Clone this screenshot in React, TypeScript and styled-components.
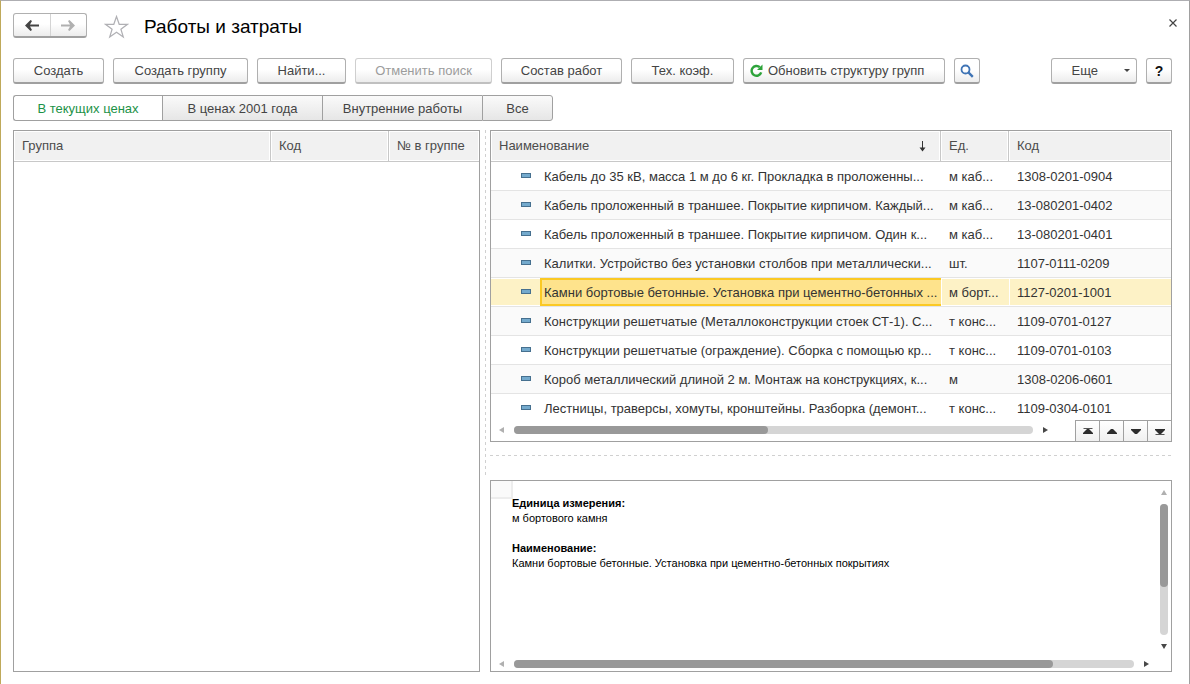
import React from "react";
import styled, { createGlobalStyle, css } from "styled-components";

const GlobalStyle = createGlobalStyle`
  *, *::before, *::after { box-sizing: border-box; }
  body { margin: 0; background: #fff; }
  body, button, table {
    font-family: "Liberation Sans", Arial, sans-serif;
    font-size: 13px;
    line-height: 16px;
    color: #333;
  }
`;

const line = "#a0a0a0";

const Window = styled.main`
  display: flex;
  flex-direction: column;
  min-height: 100vh;
  padding: 12px 17px 12px 12px;
  border-top: 1px solid #aeaeb2;
  border-left: 1px solid #bfa95a;
  border-right: 1px solid ${line};
  background: #fff;
`;

const TitleBar = styled.header`
  display: flex;
  align-items: center;
  height: 27px;
  margin-bottom: 18px;
`;

const raised = css`
  border: 1px solid #b0b0b0;
  border-bottom: 2px solid #a0a0a0;
  border-radius: 3px;
  background: linear-gradient(#fff 45%, #ececec);
`;

const NavGroup = styled.nav`
  ${raised}
  display: flex;
  align-self: flex-start;
  width: 74px;
  height: 25px;
  margin-right: 17px;
`;

const NavButton = styled.button`
  display: flex;
  flex: 1;
  align-items: center;
  justify-content: center;
  padding: 0;
  border: 0;
  background: none;
  & + & { border-left: 1px solid #d4d4d4; }
`;

const StarButton = styled.button`
  display: flex;
  padding: 0;
  border: 0;
  background: none;
`;

const Title = styled.h1`
  flex: 1;
  margin: 0 0 0 15px;
  font-size: 19px;
  line-height: 24px;
  font-weight: 400;
  color: #000;
`;

const CloseButton = styled.button`
  display: flex;
  align-self: flex-start;
  padding: 6px 3px;
  margin-right: -8px;
  border: 0;
  background: none;
`;

const Toolbar = styled.div`
  display: flex;
  gap: 9px;
  margin-bottom: 11px;
`;

const ToolButton = styled.button<{ $width: number }>`
  ${raised}
  display: flex;
  align-items: center;
  justify-content: center;
  gap: 5px;
  width: ${(p) => p.$width}px;
  height: 26px;
  padding: 0;
  color: #444;
  white-space: nowrap;
  &:disabled { color: #9c9c9c; border-color: #cfcfcf; border-bottom-color: #c0c0c0; }
`;

const RefreshButton = styled(ToolButton)`
  justify-content: flex-start;
  padding-left: 6px;
`;

const MoreButton = styled(ToolButton)`
  justify-content: flex-end;
  gap: 26px;
  padding-right: 6px;
`;

const HelpButton = styled(ToolButton)`
  font-size: 14px;
  font-weight: 700;
  color: #111;
`;

const Spacer = styled.span`
  flex: 1;
`;

const Segments = styled.div`
  display: flex;
  margin-bottom: 9px;
`;

const Segment = styled.button<{ $width: number; $active?: boolean }>`
  width: ${(p) => p.$width}px;
  height: 26px;
  padding: 2px 0 0;
  border: 1px solid ${line};
  border-right-width: 0;
  background: ${(p) => (p.$active ? "#fff" : "linear-gradient(#fafafa, #e6e6e6)")};
  color: ${(p) => (p.$active ? "#1c9247" : "#444")};
  &:first-child { border-radius: 3px 0 0 3px; }
  &:last-child { border-right-width: 1px; border-radius: 0 3px 3px 0; }
`;

const Workspace = styled.div`
  display: grid;
  flex: 1;
  grid-template-columns: minmax(0, 467fr) 10px minmax(0, 682fr);
  grid-template-rows: auto minmax(192px, 1fr);
`;

const Panel = styled.section`
  display: flex;
  flex-direction: column;
  border: 1px solid ${line};
  background: #fff;
`;

const GroupPanel = styled(Panel)`
  grid-row: span 2;
`;

const VerticalSplitter = styled.div`
  width: 1px;
  margin: 0 0 5px 5px;
  background: repeating-linear-gradient(#d0d0d0 0 3px, transparent 3px 6px);
`;

const HorizontalSplitter = styled.div`
  height: 1px;
  margin: 13px 0 24px;
  background: repeating-linear-gradient(90deg, #d0d0d0 0 3px, transparent 3px 6px);
`;

const Grid = styled.table`
  width: 100%;
  table-layout: fixed;
  border-collapse: separate;
  border-spacing: 0;
`;

const HeadCell = styled.th<{ $width?: number }>`
  width: ${(p) => (p.$width ? `${p.$width}px` : "auto")};
  height: 31px;
  padding: 0 0 0 8px;
  border-right: 1px solid #c8c8c8;
  border-bottom: 1px solid #c8c8c8;
  background: #f1f1f1;
  box-shadow: inset 0 0 0 1px #fff;
  font-weight: 400;
  text-align: left;
  color: #4c4c4c;
  white-space: nowrap;
  &:last-child { border-right: 0; }
`;

const SortedHead = styled.span`
  display: flex;
  align-items: center;
  justify-content: space-between;
  padding-right: 14px;
`;

const RowsViewport = styled.div`
  height: 289px;
  overflow: hidden;
`;

const Cell = styled.td`
  height: 29px;
  padding: 2px 0 0 8px;
  border-bottom: 1px solid #e4e4e4;
  overflow: hidden;
  white-space: nowrap;
`;

const MarkCell = styled(Cell)`
  padding: 0 0 1px 30px;
`;

const NameCell = styled(Cell)`
  padding-left: 4px;
`;

const Row = styled.tr<{ $selected?: boolean }>`
  &:nth-child(even) { background: #fafafa; }
  ${(p) =>
    p.$selected &&
    css`
      && { background: #fdf2c6; }
      ${Cell} { box-shadow: inset 0 1px #fff, inset 0 -1px #fff, inset 1px 0 #fff; }
      ${MarkCell} { box-shadow: inset 0 1px #fff, inset 0 -1px #fff; }
      ${NameCell} {
        background: #fee38c;
        box-shadow: inset 0 2px #fbc924, inset 0 -2px #fbc924, inset 2px 0 #fbc924;
      }
    `}
`;

const Mark = styled.span`
  display: block;
  width: 10px;
  height: 5px;
  border: 1px solid #46708f;
  background: #74aacd;
`;

const ScrollRow = styled.div`
  display: flex;
  height: 21px;
  padding-left: 8px;
`;

const DetailsScrollRow = styled(ScrollRow)`
  height: 15px;
  padding-right: 22px;
`;

const ScrollArea = styled.div<{ $vertical?: boolean }>`
  display: flex;
  flex: 1;
  flex-direction: ${(p) => (p.$vertical ? "column" : "row")};
  align-items: center;
  gap: ${(p) => (p.$vertical ? 9 : 10)}px;
`;

const TableScroll = styled(ScrollArea)`
  padding: 0 27px 2px 0;
`;

const Track = styled.div<{ $vertical?: boolean }>`
  display: flex;
  flex: 1;
  flex-direction: ${(p) => (p.$vertical ? "column" : "row")};
  ${(p) => (p.$vertical ? "width" : "height")}: 8px;
  border-radius: 4px;
  background: #d5d5d5;
`;

const Thumb = styled.div<{ $share: number }>`
  flex: 0 0 ${(p) => p.$share}%;
  border-radius: 4px;
  background: #999;
`;

const Pager = styled.div`
  display: flex;
`;

const PagerButton = styled.button`
  display: flex;
  align-items: center;
  justify-content: center;
  width: 24px;
  padding: 0;
  border: solid ${line};
  border-width: 1px 0 0 1px;
  background: linear-gradient(#fff, #f0f0f0);
`;

const DetailsBody = styled.div`
  display: flex;
  flex: 1;
`;

const SheetCorner = styled.div`
  width: 22px;
  height: 18px;
  border: solid #ededed;
  border-width: 0 2px 2px 0;
  background: #fafafa;
`;

const Details = styled.dl`
  flex: 1;
  margin: 15px 0 0 -1px;
  font-size: 11px;
  line-height: 15px;
  color: #000;
`;

const Term = styled.dt`
  font-weight: 700;
`;

const Description = styled.dd`
  margin: 0 0 15px;
`;

const VerticalScrollColumn = styled.div`
  display: flex;
  width: 8px;
  margin: 9px 3px 7px 0;
`;

type Direction = "up" | "down" | "left" | "right";

const arrowPaths: Record<Direction, string> = {
  up: "M0 5L3 0L6 5Z",
  down: "M0 0L3 5L6 0Z",
  left: "M5 0L0 3L5 6Z",
  right: "M0 0L5 3L0 6Z",
};

function ScrollArrow({ to, muted }: { to: Direction; muted?: boolean }) {
  const upright = to === "up" || to === "down";
  return (
    <svg width={upright ? 6 : 5} height={upright ? 5 : 6} aria-hidden="true">
      <path d={arrowPaths[to]} fill={muted ? "#b0b0b0" : "#484848"} />
    </svg>
  );
}

function PagerIcon({ down, edge }: { down?: boolean; edge?: boolean }) {
  return (
    <svg width="10" height="8" viewBox="0 0 10 8" aria-hidden="true">
      <path d={down ? "M0 2H10V3L6 7H4L0 3Z" : "M0 7H10V6L6 2H4L0 6Z"} fill="#2d2d2d" />
      {edge && <path d={down ? "M0.500 7.500H9.500" : "M0.500 1.500H9.500"} stroke="#555" />}
    </svg>
  );
}

function NavArrow({ forward }: { forward?: boolean }) {
  return (
    <svg width="14" height="11" viewBox="0 0 14 11" aria-hidden="true">
      <path
        d={
          forward
            ? "M0 4.500H9L7 1L8.500 0L14 5.500L8.500 11L7 10L9 6.500H0Z"
            : "M14 4.500H5L7 1L5.500 0L0 5.500L5.500 11L7 10L5 6.500H14Z"
        }
        fill={forward ? "#b0b0b0" : "#444"}
      />
    </svg>
  );
}

const rows = [
  ["Кабель до 35 кВ, масса 1 м до 6 кг. Прокладка в проложенны...", "м каб...", "1308-0201-0904"],
  ["Кабель проложенный в траншее. Покрытие кирпичом. Каждый...", "м каб...", "13-080201-0402"],
  ["Кабель проложенный в траншее. Покрытие кирпичом. Один к...", "м каб...", "13-080201-0401"],
  ["Калитки. Устройство без установки столбов при металлически...", "шт.", "1107-0111-0209"],
  ["Камни бортовые бетонные. Установка при цементно-бетонных ...", "м борт...", "1127-0201-1001"],
  ["Конструкции решетчатые (Металлоконструкции стоек СТ-1). С...", "т конс...", "1109-0701-0127"],
  ["Конструкции решетчатые (ограждение). Сборка с помощью кр...", "т конс...", "1109-0701-0103"],
  ["Короб металлический длиной 2 м. Монтаж на конструкциях, к...", "м", "1308-0206-0601"],
  ["Лестницы, траверсы, хомуты, кронштейны. Разборка (демонт...", "т конс...", "1109-0304-0101"],
];
const selectedCode = "1127-0201-1001";

export default function App() {
  return (
    <Window>
      <GlobalStyle />
      <TitleBar>
        <NavGroup>
          <NavButton aria-label="Назад"><NavArrow /></NavButton>
          <NavButton aria-label="Вперед"><NavArrow forward /></NavButton>
        </NavGroup>
        <StarButton aria-label="Избранное">
          <svg width="25" height="24" viewBox="0 0 25 24" aria-hidden="true">
            <path
              d="M12.500 1.500L15.200 9.300H23.500L16.900 14.200L19.300 22L12.500 17.200L5.700 22L8.100 14.200L1.500 9.300H9.800Z"
              fill="none"
              stroke="#b0b0b4"
              strokeWidth="1.200"
            />
          </svg>
        </StarButton>
        <Title>Работы и затраты</Title>
        <CloseButton aria-label="Закрыть">
          <svg width="8" height="8" viewBox="0 0 8 8" aria-hidden="true">
            <path d="M0.500 0.500L7.500 7.500M7.500 0.500L0.500 7.500" stroke="#444" strokeWidth="1.200" />
          </svg>
        </CloseButton>
      </TitleBar>

      <Toolbar>
        <ToolButton $width={91}>Создать</ToolButton>
        <ToolButton $width={135}>Создать группу</ToolButton>
        <ToolButton $width={89}>Найти...</ToolButton>
        <ToolButton $width={137} disabled>Отменить поиск</ToolButton>
        <ToolButton $width={121}>Состав работ</ToolButton>
        <ToolButton $width={103}>Тех. коэф.</ToolButton>
        <RefreshButton $width={202}>
          <svg width="13" height="13" viewBox="0 0 13 13" aria-hidden="true">
            <path d="M9.800 3.200A4.900 4.900 0 1 0 11.200 8.400" fill="none" stroke="#2da33a" strokeWidth="2.400" />
            <path d="M12.500 0.500V6H7Z" fill="#2da33a" />
          </svg>
          Обновить структуру групп
        </RefreshButton>
        <ToolButton $width={26} aria-label="Поиск">
          <svg width="14" height="14" viewBox="0 0 14 14" aria-hidden="true">
            <circle cx="5.500" cy="5.500" r="4" fill="none" stroke="#3f74b5" strokeWidth="1.800" />
            <path d="M8.400 8.400L12.800 12.800" stroke="#3f74b5" strokeWidth="2.400" />
          </svg>
        </ToolButton>
        <Spacer />
        <MoreButton $width={86}>
          Еще
          <svg width="6" height="3" viewBox="0 0 6 3" aria-hidden="true">
            <path d="M0 0H6L3 3Z" fill="#444" />
          </svg>
        </MoreButton>
        <HelpButton $width={26}>?</HelpButton>
      </Toolbar>

      <Segments>
        <Segment $width={149} $active>В текущих ценах</Segment>
        <Segment $width={160}>В ценах 2001 года</Segment>
        <Segment $width={160}>Внутренние работы</Segment>
        <Segment $width={71}>Все</Segment>
      </Segments>

      <Workspace>
        <GroupPanel>
          <Grid>
            <thead>
              <tr>
                <HeadCell>Группа</HeadCell>
                <HeadCell $width={118}>Код</HeadCell>
                <HeadCell $width={90}>№ в группе</HeadCell>
              </tr>
            </thead>
          </Grid>
        </GroupPanel>
        <VerticalSplitter />
        <div>
          <Panel>
            <RowsViewport>
              <Grid>
                <colgroup>
                  <col width="49" />
                  <col />
                  <col width="68" />
                  <col width="162" />
                </colgroup>
                <thead>
                  <tr>
                    <HeadCell colSpan={2}>
                      <SortedHead>
                        Наименование
                        <svg width="7" height="11" viewBox="0 0 7 11" aria-hidden="true">
                          <path d="M3.500 0V8" stroke="#333" />
                          <path d="M0.500 6.500H6.500L3.500 10.500Z" fill="#333" />
                        </svg>
                      </SortedHead>
                    </HeadCell>
                    <HeadCell $width={68}>Ед.</HeadCell>
                    <HeadCell $width={162}>Код</HeadCell>
                  </tr>
                </thead>
                <tbody>
                  {rows.map(([name, unit, code]) => (
                    <Row key={code} $selected={code === selectedCode}>
                      <MarkCell><Mark /></MarkCell>
                      <NameCell>{name}</NameCell>
                      <Cell>{unit}</Cell>
                      <Cell>{code}</Cell>
                    </Row>
                  ))}
                </tbody>
              </Grid>
            </RowsViewport>
            <ScrollRow>
              <TableScroll>
                <ScrollArrow to="left" muted />
                <Track><Thumb $share={49} /></Track>
                <ScrollArrow to="right" />
              </TableScroll>
              <Pager>
                <PagerButton aria-label="В начало"><PagerIcon edge /></PagerButton>
                <PagerButton aria-label="Вверх"><PagerIcon /></PagerButton>
                <PagerButton aria-label="Вниз"><PagerIcon down /></PagerButton>
                <PagerButton aria-label="В конец"><PagerIcon down edge /></PagerButton>
              </Pager>
            </ScrollRow>
          </Panel>
          <HorizontalSplitter />
        </div>
        <Spacer />
        <Panel>
          <DetailsBody>
            <SheetCorner />
            <Details>
              <Term>Единица измерения:</Term>
              <Description>м бортового камня</Description>
              <Term>Наименование:</Term>
              <Description>Камни бортовые бетонные. Установка при цементно-бетонных покрытиях</Description>
            </Details>
            <VerticalScrollColumn>
              <ScrollArea $vertical>
                <ScrollArrow to="up" muted />
                <Track $vertical><Thumb $share={63} /></Track>
                <ScrollArrow to="down" />
              </ScrollArea>
            </VerticalScrollColumn>
          </DetailsBody>
          <DetailsScrollRow>
            <ScrollArea>
              <ScrollArrow to="left" muted />
              <Track><Thumb $share={87} /></Track>
              <ScrollArrow to="right" />
            </ScrollArea>
          </DetailsScrollRow>
        </Panel>
      </Workspace>
    </Window>
  );
}
